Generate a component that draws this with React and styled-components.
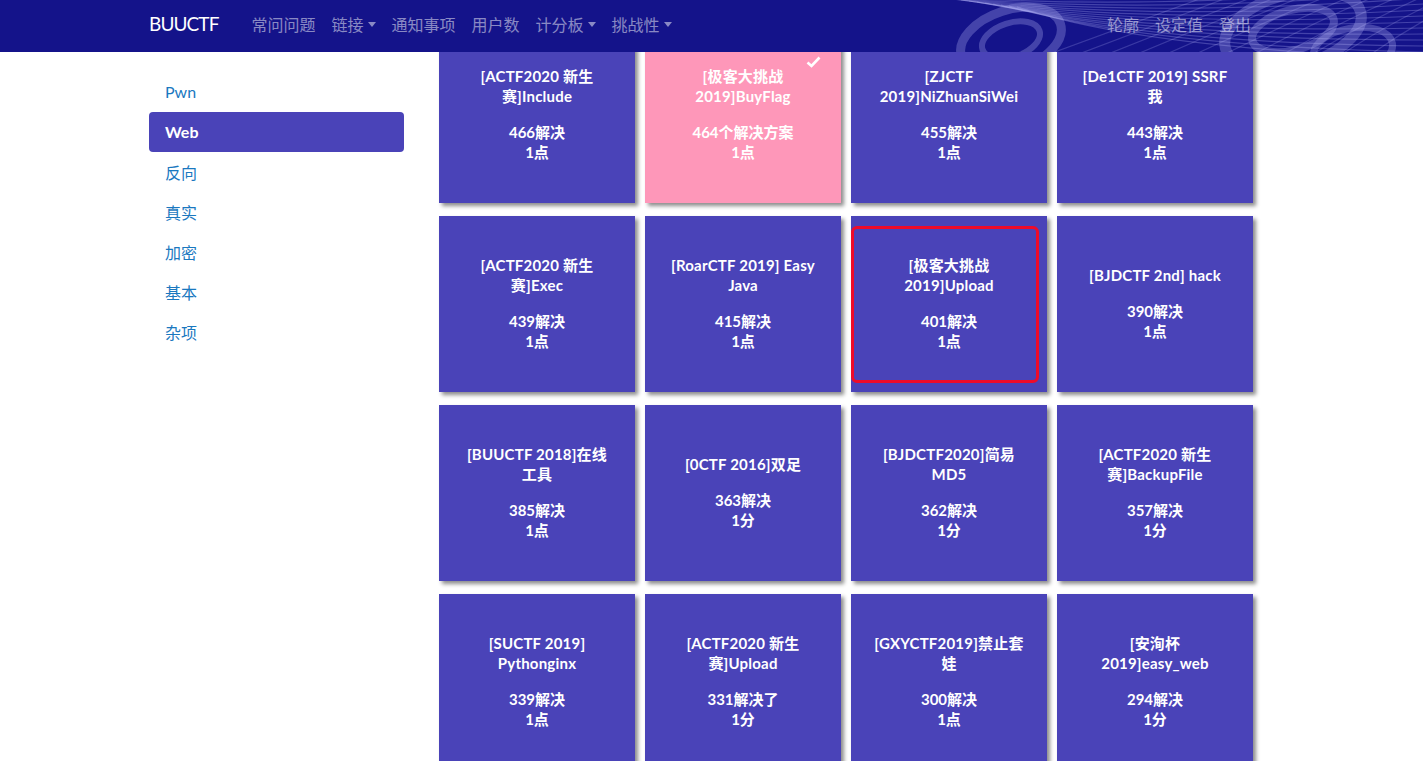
import React from 'react'
import styled, { createGlobalStyle } from 'styled-components'

const GlobalStyle = createGlobalStyle`
  body {
    margin: 0;
    background: #fff;
    font-family: Lato, "Noto Sans CJK SC", sans-serif;
    color: #212529;
    overflow: hidden;
  }
`

// Data
const challenges = [
  { title: '[ACTF2020 新生赛]Include', solves: '466解决', points: '1点' },
  { title: '[极客大挑战 2019]BuyFlag', solves: '464个解决方案', points: '1点', solved: true },
  { title: '[ZJCTF 2019]NiZhuanSiWei', solves: '455解决', points: '1点' },
  { title: '[De1CTF 2019] SSRF 我', solves: '443解决', points: '1点' },
  { title: '[ACTF2020 新生赛]Exec', solves: '439解决', points: '1点' },
  { title: '[RoarCTF 2019] Easy Java', solves: '415解决', points: '1点' },
  { title: '[极客大挑战 2019]Upload', solves: '401解决', points: '1点', marked: true },
  { title: '[BJDCTF 2nd] hack', solves: '390解决', points: '1点' },
  { title: '[BUUCTF 2018]在线工具', solves: '385解决', points: '1点' },
  { title: '[0CTF 2016]双足', solves: '363解决', points: '1分' },
  { title: '[BJDCTF2020]简易MD5', solves: '362解决', points: '1分' },
  { title: '[ACTF2020 新生赛]BackupFile', solves: '357解决', points: '1分' },
  { title: '[SUCTF 2019] Pythonginx', solves: '339解决', points: '1点' },
  { title: '[ACTF2020 新生赛]Upload', solves: '331解决了', points: '1分' },
  { title: '[GXYCTF2019]禁止套娃', solves: '300解决', points: '1点' },
  { title: '[安洵杯 2019]easy_web', solves: '294解决', points: '1分' },
]

const categories = ['Pwn', 'Web', '反向', '真实', '加密', '基本', '杂项']

const leftLinks = [
  { label: '常问问题' },
  { label: '链接', drop: true },
  { label: '通知事项' },
  { label: '用户数' },
  { label: '计分板', drop: true },
  { label: '挑战性', drop: true },
]
const rightLinks = ['轮廓', '设定值', '登出']

// Window
const Viewport = styled.div`
  position: relative;
  height: 100vh;
  overflow-y: scroll;
  &::-webkit-scrollbar { width: 7px; }
  &::-webkit-scrollbar-track { background: #fafafa; border-left: 1px solid #e4e4e4; }
  &::-webkit-scrollbar-thumb { background: #c4c4c4; border-radius: 4px; }
`

// Navbar
const Navbar = styled.nav`
  position: sticky;
  top: 0;
  height: 52px;
  margin-bottom: -52px;
  background: #14138a;
  overflow: hidden;
  z-index: 10;
`

const NavInner = styled.div`
  position: relative;
  z-index: 1;
  width: 1102px;
  height: 100%;
  margin-left: 149px;
  display: flex;
  align-items: center;
  padding-bottom: 5px;
  box-sizing: border-box;
`

const Brand = styled.a`
  font-size: 19px;
  color: #fff;
  margin-right: 33px;
  letter-spacing: -0.9px;
`

const NavList = styled.div`
  display: flex;
  align-items: center;
  margin-left: ${p => (p.$right ? 'auto' : '0')};
`

const NavLink = styled.a`
  display: flex;
  align-items: center;
  padding: 0 8px;
  font-size: 16px;
  color: rgba(255, 255, 255, 0.5);
  &:first-child { padding-left: 0; }
  &:last-child { padding-right: 0; }
`

const Caret = styled.span`
  display: inline-block;
  margin-left: 4px;
  margin-top: 2px;
  border-top: 5px solid rgba(255, 255, 255, 0.5);
  border-left: 4px solid transparent;
  border-right: 4px solid transparent;
`

const Swirls = styled.svg`
  position: absolute;
  top: 0;
  right: 0;
  width: 540px;
  height: 52px;
  pointer-events: none;
`

const NavPattern = () => {
  const lines = []
  for (let i = 0; i < 14; i++) {
    lines.push(
      <path
        key={'a' + i}
        d={`M ${30 + i * 8} ${-6 + i * 1} Q ${260} ${10 + i * 3} ${540} ${-20 + i * 6}`}
        fill="none"
        stroke="rgba(190,190,255,0.28)"
        strokeWidth="1.2"
      />
    )
  }
  for (let i = 0; i < 12; i++) {
    lines.push(
      <path
        key={'b' + i}
        d={`M ${150 + i * 30} 60 Q ${260 + i * 25} 20 ${330 + i * 24} -6`}
        fill="none"
        stroke="rgba(190,190,255,0.22)"
        strokeWidth="1.2"
      />
    )
  }
  return (
    <Swirls viewBox="0 0 540 52">
      <g fill="none" stroke="rgba(170,170,240,0.32)">
        <ellipse cx="128" cy="40" rx="52" ry="30" strokeWidth="9" transform="rotate(-18 128 40)" />
        <ellipse cx="128" cy="40" rx="30" ry="17" strokeWidth="6" transform="rotate(-18 128 40)" />
        <ellipse cx="410" cy="30" rx="70" ry="36" strokeWidth="11" transform="rotate(-15 410 30)" />
        <ellipse cx="410" cy="30" rx="42" ry="20" strokeWidth="8" transform="rotate(-15 410 30)" />
        <ellipse cx="470" cy="50" rx="40" ry="22" strokeWidth="7" transform="rotate(-10 470 50)" />
      </g>
      {lines}
    </Swirls>
  )
}

// Page
const Page = styled.div`
  width: 1114px;
  margin-left: 149px;
  display: flex;
  align-items: flex-start;
  gap: 35px;
  padding-bottom: 60px;
`

const Sidebar = styled.ul`
  list-style: none;
  margin: 72px 0 0;
  padding: 0;
  width: 255px;
  flex-shrink: 0;
`

const SideItem = styled.li`
  height: 40px;
  box-sizing: border-box;
  display: flex;
  align-items: center;
  padding: 0 16px 1px;
  border-radius: 4px;
  font-size: 16px;
  color: ${p => (p.$active ? '#fff' : '#1a78bf')};
  background: ${p => (p.$active ? '#4a43b8' : 'transparent')};
  font-weight: ${p => (p.$active ? 700 : 400)};
`

const Grid = styled.div`
  margin-top: 27px;
  display: grid;
  grid-template-columns: repeat(4, 196px);
  column-gap: 10px;
  row-gap: 13px;
`

const Card = styled.div`
  position: relative;
  height: 176px;
  padding: 0 23px 3px;
  box-sizing: border-box;
  display: flex;
  flex-direction: column;
  justify-content: center;
  align-items: center;
  text-align: center;
  color: #fff;
  font-weight: 700;
  font-size: 15px;
  line-height: 20px;
  background: ${p => (p.$solved ? '#fe97b9' : '#4a43b8')};
  box-shadow: 3px 3px 4px rgba(0, 0, 0, 0.45);
`

const Title = styled.div`
  margin-bottom: 16px;
  letter-spacing: 0.2px;
`

const Check = styled.svg`
  position: absolute;
  top: 29px;
  right: 20px;
  width: 15px;
  height: 12px;
`

const Marker = styled.div`
  position: absolute;
  left: 0;
  top: 10px;
  right: 8px;
  bottom: 9px;
  border: 3px solid #ee0b2a;
  border-radius: 6px;
`

const Challenge = ({ c }) => (
  <Card $solved={c.solved}>
    {c.solved && (
      <Check viewBox="0 0 15 12">
        <path d="M1.5 6.5 L5.5 10 L13.5 1.5" fill="none" stroke="#fff" strokeWidth="2.6" />
      </Check>
    )}
    {c.marked && <Marker />}
    <Title>{c.title}</Title>
    <div>{c.solves}</div>
    <div>{c.points}</div>
  </Card>
)

export default function App() {
  return (
    <Viewport>
      <GlobalStyle />
      <Navbar>
        <NavPattern />
        <NavInner>
          <Brand>BUUCTF</Brand>
          <NavList>
            {leftLinks.map(l => (
              <NavLink key={l.label}>
                {l.label}
                {l.drop && <Caret />}
              </NavLink>
            ))}
          </NavList>
          <NavList $right>
            {rightLinks.map(l => (
              <NavLink key={l}>{l}</NavLink>
            ))}
          </NavList>
        </NavInner>
      </Navbar>
      <Page>
        <Sidebar>
          {categories.map(c => (
            <SideItem key={c} $active={c === 'Web'}>{c}</SideItem>
          ))}
        </Sidebar>
        <Grid>
          {challenges.map(c => (
            <Challenge key={c.title} c={c} />
          ))}
        </Grid>
      </Page>
    </Viewport>
  )
}
